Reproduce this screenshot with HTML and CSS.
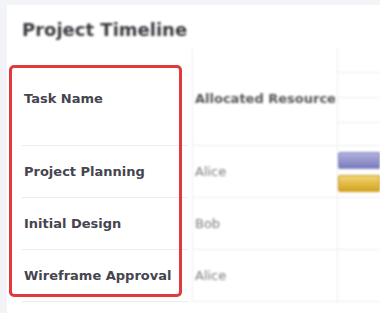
FILE: index.html
```html
<!DOCTYPE html>
<html>
<head>
<meta charset="utf-8">
<link rel="stylesheet" href="styles.css">
</head>
<body>
<div class="card">
  <h1 class="title">Project Timeline</h1>
  <div class="table">
    <div class="col col-task">
      <div class="cell head"><span>Task Name</span></div>
      <div class="cell row"><span>Project Planning</span></div>
      <div class="cell row"><span>Initial Design</span></div>
      <div class="cell row"><span>Wireframe Approval</span></div>
    </div>
    <div class="col col-res dim">
      <div class="cell head"><span>Allocated Resource</span></div>
      <div class="cell row"><span>Alice</span></div>
      <div class="cell row"><span>Bob</span></div>
      <div class="cell row"><span>Alice</span></div>
    </div>
    <div class="col col-time dim">
      <div class="cell head timehead">
        <div class="sub"></div>
        <div class="sub"></div>
        <div class="sub"></div>
        <div class="sub last"></div>
      </div>
      <div class="cell row bars">
        <div class="bar bar-purple"></div>
        <div class="bar bar-gold"></div>
      </div>
      <div class="cell row"></div>
      <div class="cell row"></div>
    </div>
  </div>
</div>
<div class="highlight"></div>
</body>
</html>
```
FILE: styles.css
```css
html, body {
  margin: 0;
  padding: 0;
}
body {
  background: #f3f4f8;
  width: 380px;
  height: 313px;
  overflow: hidden;
  position: relative;
  font-family: "DejaVu Sans", Verdana, sans-serif;
}
.card {
  margin: 5px 0 0 7px;
  background: #ffffff;
  padding: 14px 0 0 15px;
  height: 294px;
}
.title {
  margin: 0 0 7px 0;
  font-size: 18px;
  line-height: 22px;
  font-weight: bold;
  color: #3a3a40;
  filter: blur(0.8px);
}
.table {
  display: flex;
}
.col {
  display: flex;
  flex-direction: column;
}
.col-task {
  width: 170px;
}
.col-res {
  width: 144px;
  border-left: 1px solid #ececec;
}
.col-time {
  flex: 1;
  border-left: 1px solid #ececec;
}
.cell {
  box-sizing: border-box;
  display: flex;
  align-items: center;
  border-bottom: 1px solid #ececec;
  font-size: 13px;
}
.head {
  height: 98px;
  font-weight: bold;
}
.row {
  height: 52px;
}
.col-task .cell {
  margin-right: 4px;
  padding-left: 2px;
  color: #45454f;
  font-weight: bold;
}
.col-task .head {
  padding-top: 3px;
}
.col-res .cell {
  padding-left: 2px;
  color: #7c7c7c;
}
.col-res .head {
  color: #555555;
  padding-top: 3px;
}
.dim {
  filter: blur(0.9px);
}
.timehead {
  flex-direction: column;
  align-items: stretch;
}
.sub {
  height: 25px;
  box-sizing: border-box;
  border-bottom: 1px solid #ececec;
}
.sub.last {
  flex: 1;
  border-bottom: none;
}
.bars {
  flex-direction: column;
  align-items: stretch;
  justify-content: flex-start;
  padding-top: 6px;
  gap: 6px;
}
.bar {
  height: 17px;
  border-radius: 2px 0 0 2px;
  box-sizing: border-box;
}
.bar-purple {
  background: linear-gradient(#b0b0de, #7b7bbd);
  border: 1px solid #8686c2;
}
.bar-gold {
  background: linear-gradient(#f1d676, #d3a31c);
  border: 1px solid #c99d2a;
}
.highlight {
  position: absolute;
  left: 9px;
  top: 65px;
  width: 173px;
  height: 232px;
  box-sizing: border-box;
  border: 3px solid #e2393d;
  border-radius: 5px;
}
```
